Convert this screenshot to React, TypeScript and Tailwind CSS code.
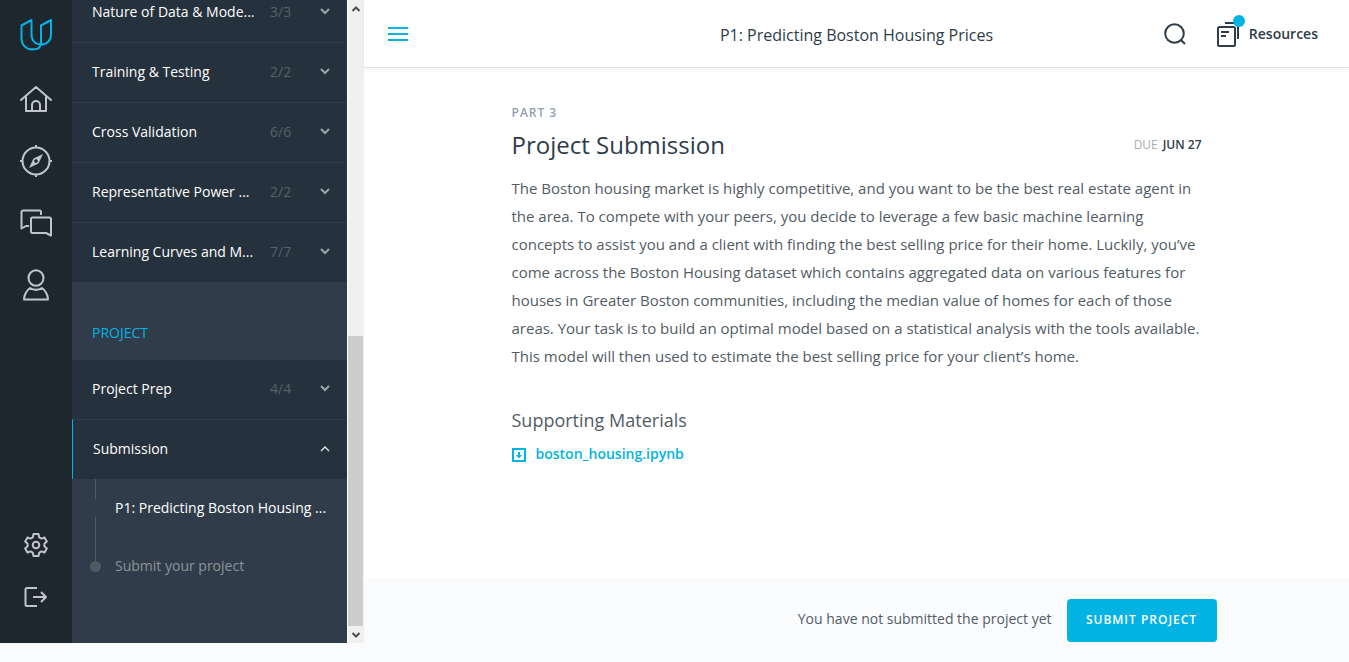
import React from "react";

const lessons = [
  { title: "Nature of Data & Mode...", count: "3/3" },
  { title: "Training & Testing", count: "2/2" },
  { title: "Cross Validation", count: "6/6" },
  { title: "Representative Power ...", count: "2/2" },
  { title: "Learning Curves and M...", count: "7/7" },
];

function Logo() {
  return (
    <svg width="32" height="32" viewBox="0 0 32 32" fill="none" stroke="#02b3e4" strokeWidth="2" strokeLinejoin="round">
      <path d="M11.5 1 L1.5 6.5 V19 C1.5 26 6 30.5 12.5 30.5 C17.5 30.5 21 28.5 21 24 V6.5 L31 1 V15 C31 21.500 27 25.500 21 25.500 C15 25.500 11.500 21.500 11.500 15 Z" />
    </svg>
  );
}

function HomeIcon() {
  return (
    <svg width="32" height="28" viewBox="0 0 32 28" fill="none" stroke="#bfc5ca" strokeWidth="2" strokeLinejoin="round" strokeLinecap="round">
      <path d="M1 15 L16 2 L31 15 M6 11.500 V26 H26 V11.500 M12 26 V20 a4 4 0 0 1 8 0 V26" />
    </svg>
  );
}

function CompassIcon() {
  return (
    <svg width="32" height="32" viewBox="0 0 32 32" fill="none" stroke="#bfc5ca" strokeWidth="2">
      <circle cx="16" cy="16" r="13.500" />
      <path d="M16 0 V3 M16 29 V32 M0 16 H3 M29 16 H32" />
      <path d="M23 9 L18.500 18.500 L9 23 L13.500 13.500 Z M16 14.200 a1.800 1.800 0 1 0 0.010 0 Z" fill="#bfc5ca" fillRule="evenodd" stroke="none" />
    </svg>
  );
}

function ChatIcon() {
  return (
    <svg width="32" height="28" viewBox="0 0 32 28" fill="none" stroke="#bfc5ca" strokeWidth="2" strokeLinejoin="round">
      <path d="M21 6 V3 a1.500 1.500 0 0 0 -1.500 -1.500 H3 A1.500 1.500 0 0 0 1.500 3 V19.500 L6 17 H9" />
      <path d="M12.500 8.500 H29.500 a1.500 1.500 0 0 1 1.500 1.500 V26.500 L26 24 H12.500 A1.500 1.500 0 0 1 11 22.500 V10 a1.500 1.500 0 0 1 1.500 -1.500 Z" />
    </svg>
  );
}

function UserIcon() {
  return (
    <svg width="28" height="32" viewBox="0 0 28 32" fill="none" stroke="#bfc5ca" strokeWidth="2" strokeLinejoin="round">
      <ellipse cx="14" cy="9" rx="7.500" ry="7.800" />
      <path d="M8 19 C5 21 2 26 2 30.500 H26 C26 26 23 21 20 19 C16 21.500 12 21.500 8 19 Z" />
    </svg>
  );
}

function GearIcon() {
  return (
    <svg width="24" height="26" viewBox="0 0 24 26" fill="none" stroke="#bfc5ca" strokeWidth="2" strokeLinejoin="round">
      <path d="M9.500 2 H14.500 L15.200 5.300 L17.500 6.600 L20.500 5.500 L22.800 9.500 L20.400 11.800 V14.200 L22.800 16.500 L20.500 20.500 L17.500 19.400 L15.200 20.700 L14.500 24 H9.500 L8.800 20.700 L6.500 19.400 L3.500 20.500 L1.200 16.500 L3.600 14.200 V11.800 L1.200 9.500 L3.500 5.500 L6.500 6.600 L8.800 5.300 Z" />
      <circle cx="12" cy="13" r="3.300" />
    </svg>
  );
}

function LogoutIcon() {
  return (
    <svg width="24" height="20" viewBox="0 0 24 20" fill="none" stroke="#bfc5ca" strokeWidth="2" strokeLinejoin="round">
      <path d="M13 1 H3 A1.500 1.500 0 0 0 1.500 2.500 V17.500 A1.500 1.500 0 0 0 3 19 H13 M9 10 H22 M17 5 L22 10 L17 15" />
    </svg>
  );
}

function Chevron({ up = false }: { up?: boolean }) {
  return up ? (
    <svg width="10" height="8" viewBox="0 0 10 8" fill="none" stroke="#e6e9ec" strokeWidth="1.300">
      <path d="M1 6 L5 2 L9 6" />
    </svg>
  ) : (
    <svg width="10" height="8" viewBox="0 0 10 8" fill="none" stroke="#9aa3aa" strokeWidth="2">
      <path d="M1 1 L5 5 L9 1" />
    </svg>
  );
}

function LessonRow({ title, count }: { title: string; count: string }) {
  return (
    <button className="flex h-15 w-full shrink-0 items-center border-t border-[#303c48] bg-[#25313c] pr-[17px] pb-0.5 pl-5 text-left">
      <span className="flex-1 text-white">{title}</span>
      <span className="w-[50px] text-[#56616b]">{count}</span>
      <Chevron />
    </button>
  );
}

function NavRail() {
  return (
    <nav className="flex w-18 shrink-0 flex-col items-center bg-[#1e272e] pt-[19px] pb-9">
      <a href="#" aria-label="Udacity"><Logo /></a>
      <div className="mt-[34px] flex flex-col items-center gap-8">
        <a href="#home" aria-label="Home"><HomeIcon /></a>
        <a href="#catalog" aria-label="Catalog"><CompassIcon /></a>
        <a href="#discussions" aria-label="Discussions"><ChatIcon /></a>
        <a href="#profile" aria-label="Profile"><UserIcon /></a>
      </div>
      <div className="mt-auto flex flex-col items-center gap-[29px]">
        <a href="#settings" aria-label="Settings"><GearIcon /></a>
        <a href="#logout" aria-label="Log out"><LogoutIcon /></a>
      </div>
    </nav>
  );
}

function LessonList() {
  return (
    <aside className="flex w-[275px] shrink-0 flex-col justify-end overflow-hidden bg-[#303c4a] text-sm">
      {lessons.map((l) => (
        <LessonRow key={l.title} title={l.title} count={l.count} />
      ))}
      <h2 className="flex h-[77px] shrink-0 items-end px-5 pb-4 text-[#02b3e4]">PROJECT</h2>
      <LessonRow title="Project Prep" count="4/4" />
      <button className="flex h-15 shrink-0 items-center border-t border-l border-t-[#303c48] border-l-[#02b3e4] bg-[#25313c] pr-[17px] pb-0.5 pl-5 text-left">
        <span className="flex-1 text-white">Submission</span>
        <Chevron up />
      </button>
      <ul className="h-41 shrink-0 pl-[18px]">
        <li className="flex h-[58px] gap-[14px]">
          <span className="flex w-[11px] flex-col items-center justify-between">
            <span className="h-5 w-px bg-[#4f5a64]" />
            <span className="h-5 w-px bg-[#4f5a64]" />
          </span>
          <a href="#p1" className="self-center text-white">P1: Predicting Boston Housing ...</a>
        </li>
        <li className="flex h-[58px] gap-[14px]">
          <span className="flex w-[11px] flex-col items-center">
            <span className="h-6 w-px bg-[#4f5a64]" />
            <span className="size-[11px] rounded-full bg-[#4f5a62]" />
          </span>
          <a href="#submit" className="self-center text-[#8e9499]">Submit your project</a>
        </li>
      </ul>
    </aside>
  );
}

function ScrollTrack() {
  return (
    <div className="flex w-[17px] shrink-0 flex-col border-l border-white bg-[#f0f0f0]" aria-hidden="true">
      <div className="flex h-[17px] items-center justify-center">
        <svg width="8" height="6" viewBox="0 0 8 6" fill="none" stroke="#505050" strokeWidth="2"><path d="M0.500 5 L4 1.500 L7.500 5" /></svg>
      </div>
      <div className="flex flex-1 flex-col justify-end">
        <div className="mr-px h-[47.7%] bg-[#cdcdcd]" />
      </div>
      <div className="flex h-[17px] items-center justify-center">
        <svg width="8" height="6" viewBox="0 0 8 6" fill="none" stroke="#505050" strokeWidth="2"><path d="M0.500 1 L4 4.500 L7.500 1" /></svg>
      </div>
    </div>
  );
}

function Header() {
  return (
    <header className="grid h-17 shrink-0 grid-cols-[1fr_auto_1fr] items-center border-b border-[#dbe2e8] px-6 shadow-[0_2px_4px_rgba(46,61,73,0.06)]">
      <button aria-label="Toggle menu" className="justify-self-start">
        <svg width="20" height="14" viewBox="0 0 20 14" fill="#02b3e4">
          <path d="M0 0 H20 V2 H0 Z M0 6 H20 V8 H0 Z M0 12 H20 V14 H0 Z" />
        </svg>
      </button>
      <h1 className="pt-0.5 text-base text-[#2e3d49]">P1: Predicting Boston Housing Prices</h1>
      <div className="flex items-center justify-self-end pr-[7px]">
        <button aria-label="Search">
          <svg width="22" height="22" viewBox="0 0 22 22" fill="none" stroke="#2e3d49" strokeWidth="2">
            <circle cx="10.500" cy="10.500" r="9.300" />
            <path d="M16.500 16.500 L21 21" />
          </svg>
        </button>
        <button className="ml-[30px] flex items-center gap-[3px] text-sm font-semibold text-[#2e3d49]">
          <svg width="30" height="38" viewBox="0 0 30 38" fill="none" stroke="#2e3d49" strokeWidth="2">
            <rect x="2" y="12" width="17" height="19" rx="1.500" />
            <path d="M5 17 H13 M5 21 H10 M9 8 H21 a1 1 0 0 1 1 1 V24" />
            <circle cx="23" cy="6" r="6" fill="#02b3e4" stroke="none" />
          </svg>
          Resources
        </button>
      </div>
    </header>
  );
}

export default function App() {
  return (
    <div className="min-h-screen bg-[#fafbfd] font-['Open_Sans',sans-serif]">
      <div className="flex h-screen">
        <div className="flex pb-[19px]">
          <NavRail />
          <LessonList />
          <ScrollTrack />
        </div>
        <div className="flex min-w-0 flex-1 flex-col">
          <div className="flex flex-1 flex-col bg-white">
            <Header />
            <main className="mx-auto w-full max-w-[690px] pt-9">
              <p className="text-xs leading-[18px] font-semibold tracking-[1px] text-[#8fa0b5]">PART 3</p>
              <div className="flex items-center justify-between pt-[7px] pb-px">
                <h2 className="text-2xl text-[#2e3d49]">Project Submission</h2>
                <p className="flex gap-[5px] text-xs text-[#aaaeb3]">
                  <span>DUE</span>
                  <span className="font-semibold text-[#2e3d49]">JUN 27</span>
                </p>
              </div>
              <p className="pt-3 text-[15px] leading-7 text-[#525c65]">
                The Boston housing market is highly competitive, and you want to be the best real estate agent in
                the area. To compete with your peers, you decide to leverage a few basic machine learning
                concepts to assist you and a client with finding the best selling price for their home. Luckily, you’ve
                come across the Boston Housing dataset which contains aggregated data on various features for
                houses in Greater Boston communities, including the median value of homes for each of those
                areas. Your task is to build an optimal model based on a statistical analysis with the tools available.
                This model will then used to estimate the best selling price for your client’s home.
              </p>
              <h3 className="pt-9 text-lg text-[#525c65]">Supporting Materials</h3>
              <a href="#boston_housing.ipynb" className="mt-2 flex items-center gap-[10px] text-sm leading-6 font-semibold text-[#02b3e4]">
                <svg width="14" height="16" viewBox="0 0 14 16" fill="none" stroke="#02b3e4" strokeWidth="2">
                  <rect x="1" y="3" width="12" height="12" />
                  <path d="M7 6 V10" />
                  <path d="M4 9 H10 L7 12.500 Z" fill="#02b3e4" stroke="none" />
                </svg>
                boston_housing.ipynb
              </a>
            </main>
          </div>
          <footer className="h-21 shrink-0">
            <div className="mx-auto flex h-full w-full max-w-[720px] items-center justify-end gap-[15px]">
              <p className="pb-0.5 text-sm text-[#525c65]">You have not submitted the project yet</p>
              <button className="h-[43px] w-[150px] rounded bg-[#02b3e4] text-xs font-semibold tracking-[1px] text-white">
                SUBMIT PROJECT
              </button>
            </div>
          </footer>
        </div>
      </div>
    </div>
  );
}
